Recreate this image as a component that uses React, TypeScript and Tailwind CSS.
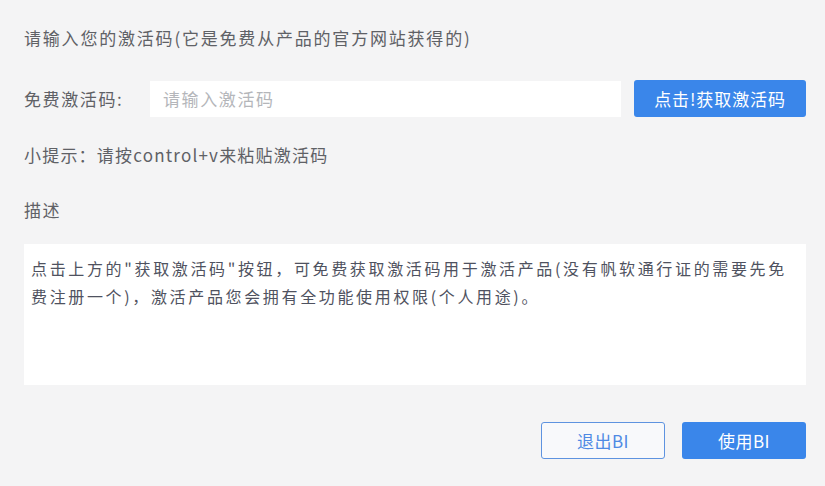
const font = { fontFamily: '"Noto Sans CJK SC", "Noto Sans", sans-serif' };

export default function App() {
  return (
    <div
      className="w-[825px] h-[486px] bg-[#f4f4f5] pl-6 pr-[19px] pt-[26px] flex flex-col text-[#5f6166] overflow-hidden"
      style={font}
    >
      <div className="text-[17px] leading-6 tracking-[1.8px]">
        请输入您的激活码(它是免费从产品的官方网站获得的)
      </div>

      <div className="mt-[30px] flex items-center h-[37px]">
        <div className="w-[126px] text-[17px] tracking-[1.6px]">免费激活码:</div>
        <div className="w-[471px] h-[36px] bg-white flex items-center pl-[13px] text-[17px] tracking-[1.6px] text-[#b4b6ba]">
          请输入激活码
        </div>
        <button className="ml-[13px] w-[172px] h-[37px] rounded-[3px] bg-[#3a86ea] text-white text-[17px] tracking-[0.9px]">
          点击!获取激活码
        </button>
      </div>

      <div className="mt-[26px] text-[17px] leading-6 tracking-[1.2px]">
        小提示：请按control+v来粘贴激活码
      </div>

      <div className="mt-[31px] text-[17px] leading-6 tracking-[1.6px]">描述</div>

      <div className="mt-[22px] h-[141px] bg-white pl-[7px] pt-[10px] text-[16px] leading-[28px] tracking-[2.65px] text-[#4f5260]">
        点击上方的"获取激活码"按钮，可免费获取激活码用于激活产品(没有帆软通行证的需要先免
        <br />
        费注册一个)，激活产品您会拥有全功能使用权限(个人用途)。
      </div>

      <div className="mt-[37px] flex justify-end gap-[17px]">
        <button className="w-[124px] h-[37px] rounded-[3px] border border-[#5e93e0] bg-[#f8f9fb] text-[#4f8ae4] text-[17px] tracking-[0.5px]">
          退出BI
        </button>
        <button className="w-[124px] h-[37px] rounded-[3px] bg-[#3a86ea] text-white text-[17px] tracking-[0.5px]">
          使用BI
        </button>
      </div>
    </div>
  );
}
